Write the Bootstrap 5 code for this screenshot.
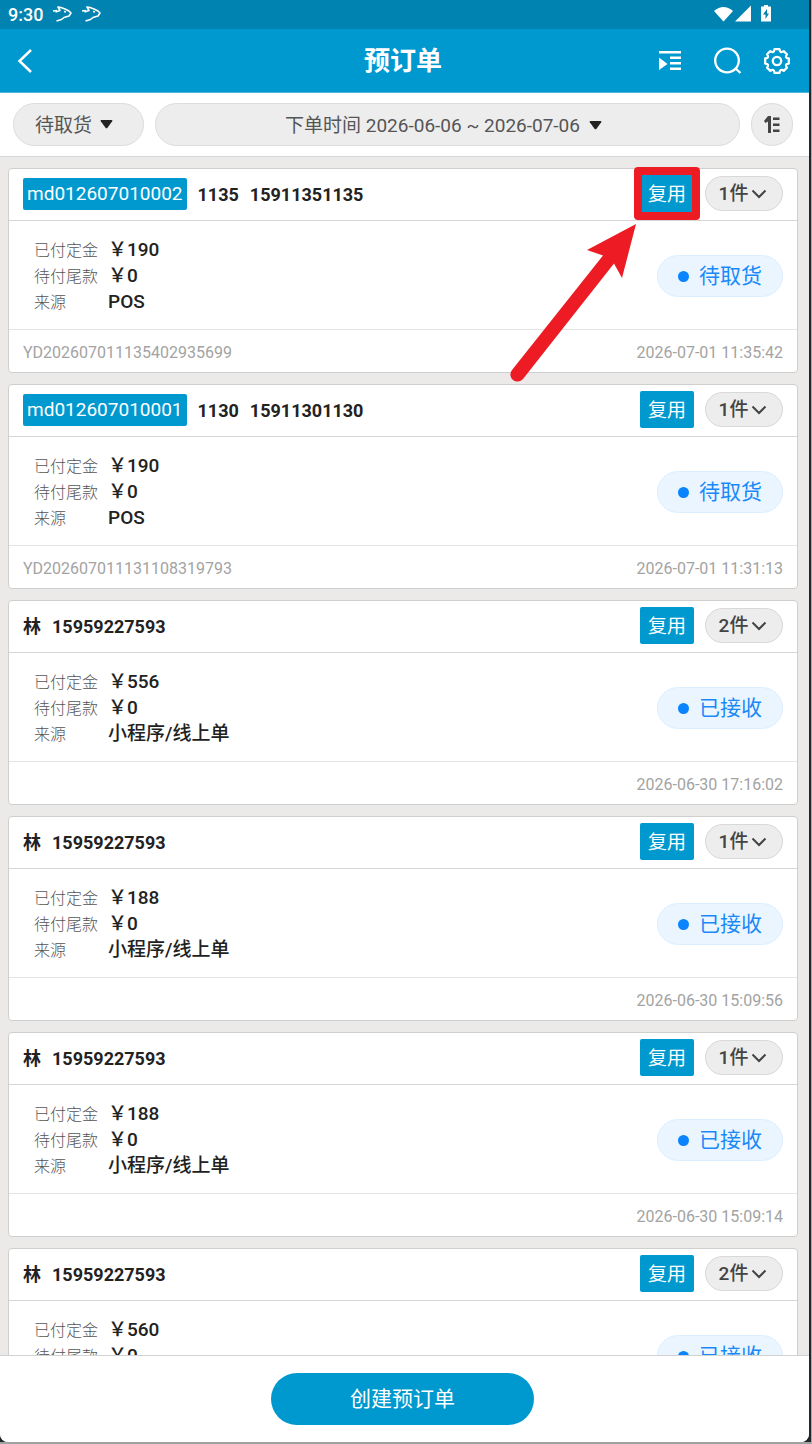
<!DOCTYPE html>
<html lang="zh-CN">
<head>
<meta charset="utf-8">
<meta name="viewport" content="width=device-width, initial-scale=1">
<title>预订单</title>
<link href="https://cdn.jsdelivr.net/npm/bootstrap@5.3.0/dist/css/bootstrap.min.css" rel="stylesheet">
<style>
  :root { --brand: #0099cf; --brand-dark: #0083b0; --mark: #ed1c24; }
  body { font-family: Roboto, "Noto Sans CJK SC", sans-serif; font-size: 19px; line-height: 26px; color: #222; background: #a8aaab; }
  button { font-family: inherit; }
  .screen { height: 100vh; background: #1f282c; padding-right: 2px; margin-right: 1px; }
  .screen-inner { height: calc(100vh - 2px); background: #ebeae9; border-radius: 0 0 8px 8px; overflow: hidden; }
  .device-edge { height: 2px; background: #a0a1a2; margin-right: -2px; }
  .status-bar { height: 29px; background: var(--brand-dark); color: #fff; font-size: 18px; font-weight: 500; padding: 0 36px 0 8px; gap: 10px; }
  .title-bar { height: 64px; background: var(--brand); color: #fff; padding: 1px 19px 0 16px; border-bottom: 1px solid #4db8dd; }
  .title-bar h1 { font-size: 26px; line-height: 36px; font-weight: 700; }
  .title-bar .side { flex: 1 1 0; gap: 22px; }
  .plain-btn { background: none; border: 0; padding: 0; color: inherit; display: flex; }
  .list-btn { margin-right: 11px; }
  .filters { background: #fff; border-bottom: 1px solid #d6d6d6; padding: 10px 16px 10px 13px; gap: 11px; }
  .pill { height: 43px; border: 1px solid #dcdcdc; border-radius: 22px; background: #ededed; color: #555; font-size: 19px; line-height: 26px; }
  .date-pick { padding: 2px 14px 0 6px; gap: 9px; }
  .state-pick { width: 131px; }
  .state-pick select { appearance: none; width: 100%; padding: 2px 21px 0; font-family: inherit; }
  .state-pick svg { position: absolute; right: 31px; top: 17px; pointer-events: none; }
  .sort-btn { width: 42px; }
  .orders { min-height: 0; overflow-y: auto; scrollbar-width: none; padding: 11px 11px 11px 8px; gap: 11px; }
  .orders::-webkit-scrollbar { display: none; }
  .order { flex-shrink: 0; border: 1px solid #cfcfcf; border-radius: 4px; background: #fff; color: #222; }
  .order-head { height: 52px; padding: 0 14px 2px; border-bottom: 1px solid #d6d6d6; gap: 11px; }
  .who { font-size: 18px; font-weight: 700; padding-top: 2px; }
  .code-tag { background: var(--brand); color: #fff; font-size: 19px; line-height: 32px; padding: 0 4px; border-radius: 2px; }
  .reuse { width: 54px; height: 37px; border: 0; border-radius: 2px; background: var(--brand); color: #fff; font-size: 19px; line-height: 26px; padding: 2px 0 0; display: block; }
  .count { width: 78px; height: 35px; border: 1px solid #d8d8d8; border-radius: 18px; background: #ededed; color: #444; font-size: 19px; line-height: 26px; font-weight: 500; padding: 0 2px 0 0; gap: 3px; }
  .order-body { min-height: 109px; padding: 16px 14px 14px 25px; border-bottom: 1px solid #e4e4e4; }
  .order-body dl { display: grid; grid-template-columns: 74px auto; grid-auto-rows: 26px; align-items: baseline; }
  .order-body dt { font-size: 16px; font-weight: 300; color: #555; }
  .order-body dd { font-weight: 500; margin: 0; }
  .state { width: 126px; height: 42px; border: 1px solid #dbeeff; border-radius: 21px; background: #ebf5ff; color: #1989fa; font-size: 21px; gap: 10px; }
  .state::before { content: ""; width: 11px; height: 11px; border-radius: 50%; background: #0a84ff; }
  .order-foot { height: 42px; padding: 3px 14px 0; font-size: 16px; color: #a3a3a3; }
  .mark-frame { position: absolute; inset: -8px -6px; border: 8px solid var(--mark); border-radius: 4px; pointer-events: none; }
  .mark-arrow { position: absolute; left: -133px; top: 45px; z-index: 2; pointer-events: none; }
  .action-bar { background: #fff; border-top: 1px solid #d2d2d2; padding: 17px 4px 17px 0; }
  .create { width: 263px; height: 52px; border: 0; border-radius: 26px; background: var(--brand); color: #fff; font-size: 21px; }
</style>
</head>
<body>
<svg class="d-none" aria-hidden="true">
  <symbol id="chev" viewBox="0 0 16 10"><path d="M1.500 1.500 8 8l6.500-6.500" fill="none" stroke="currentColor" stroke-width="2"/></symbol>
  <symbol id="caret" viewBox="0 0 13 9"><path d="M1.500 0h10q1.500 0 .700 1.200L7.500 7.800q-1 1-2 0L.800 1.200Q0 0 1.500 0z" fill="#222"/></symbol>
  <symbol id="bird" viewBox="0 0 19 17"><path d="M0 5 4 4.500M2.500 6 7 4.500 5 1 8 1.500 12 3l4 2 2 2-2 3-5 1.500-2.500 2L3.500 15M11 5.500l2 .500" fill="none" stroke="#fff" stroke-width="1.600" stroke-linejoin="round"/></symbol>
</svg>
<div class="screen">
<div class="screen-inner d-flex flex-column">
  <div class="status-bar d-flex align-items-center flex-shrink-0">
    <span>9:30</span>
    <svg width="19" height="17"><use href="#bird"/></svg>
    <svg class="me-auto" width="19" height="17"><use href="#bird"/></svg>
    <svg width="60" height="20" viewBox="0 0 60 20" fill="#fff" aria-hidden="true">
      <path d="M1 6Q10.500-2 20 6L10.500 16.500z"/>
      <path d="M38 .500v16H22z"/>
      <path d="M51 0h4v1.500h3V16.500H48V1.500h3z"/>
      <path d="M54 4v4.500h2l-3.500 5.500v-4.500H50z" fill="#0083b0"/>
    </svg>
  </div>
  <header class="title-bar d-flex align-items-center flex-shrink-0">
    <div class="side">
      <button class="plain-btn" type="button" aria-label="返回"><svg width="18" height="26" viewBox="0 0 18 26"><path d="M15 2 3.500 13 15 24" fill="none" stroke="#fff" stroke-width="2.500"/></svg></button>
    </div>
    <h1 class="mb-0">预订单</h1>
    <div class="side d-flex justify-content-end align-items-center">
      <button class="plain-btn list-btn" type="button" aria-label="列表"><svg width="22" height="20" viewBox="0 0 22 20" fill="#fff"><path d="M0 0h22v2.500H0zM11 5.500h11V8H11zM11 11h11v2.500H11zM11 16.500h11V19H11zM0 6.500 8.500 13 0 19z"/></svg></button>
      <button class="plain-btn" type="button" aria-label="搜索"><svg width="28" height="28" viewBox="0 0 28 28"><g fill="none" stroke="#fff" stroke-width="2.300"><circle cx="13" cy="13.500" r="11.800"/><path d="m21 21 5.500 5"/></g></svg></button>
      <button class="plain-btn" type="button" aria-label="设置"><svg width="26" height="26" viewBox="0 0 26 26"><g fill="none" stroke="#fff" stroke-width="2.300" stroke-linejoin="round"><path d="M24.800 10.500v5Q20.300 16 22.900 19.700L19.700 22.900Q16 20.300 15.500 24.800h-5Q10 20.300 6.300 22.900L3.100 19.700Q5.700 16 1.200 15.500v-5Q5.700 10 3.100 6.300L6.300 3.100Q10 5.700 10.500 1.200h5Q16 5.700 19.700 3.100L22.900 6.300Q20.300 10 24.800 10.500z"/><circle cx="13" cy="13" r="4.200"/></g></svg></button>
    </div>
  </header>
  <div class="filters d-flex flex-shrink-0">
    <div class="state-pick position-relative">
      <select class="pill" aria-label="订单状态"><option>待取货</option><option>已接收</option></select>
      <svg width="13" height="9" aria-hidden="true"><use href="#caret"/></svg>
    </div>
    <button class="pill date-pick flex-grow-1 d-flex align-items-center justify-content-center" type="button"><span>下单时间 2026-06-06 ~ 2026-07-06</span><svg width="13" height="9"><use href="#caret"/></svg></button>
    <button class="pill sort-btn p-0 d-flex align-items-center justify-content-center" type="button" aria-label="排序"><svg width="16" height="18" viewBox="0 0 16 18" fill="#444"><path d="M4 0h3v17H4V5.500L1.500 7 0 5zM9 1.500h6.500V4H9zM9 7.500h6.500V10H9zM9 13.500h6.500V16H9z"/></svg></button>
  </div>

  <main class="orders d-flex flex-column flex-grow-1">
    <article class="card order">
      <div class="order-head d-flex align-items-center">
        <span class="code-tag">md012607010002</span><span class="who">1135</span><span class="who">15911351135</span>
        <div class="position-relative ms-auto">
          <button class="reuse" type="button">复用</button>
          <span class="mark-frame"></span>
          <svg class="mark-arrow" width="134" height="168" viewBox="0 0 134 168" aria-hidden="true"><path d="M129 4 80 30l16 5.500L5 150a6.500 6.500 0 0 0 11 9L107 43.500 115 58z" fill="#ed1c24"/></svg>
        </div>
        <button class="count d-flex align-items-center justify-content-center" type="button">1件<svg width="16" height="10"><use href="#chev"/></svg></button>
      </div>
      <div class="order-body d-flex align-items-center justify-content-between">
        <dl class="mb-0"><dt>已付定金</dt><dd>￥190</dd><dt>待付尾款</dt><dd>￥0</dd><dt>来源</dt><dd>POS</dd></dl>
        <span class="state d-flex align-items-center justify-content-center">待取货</span>
      </div>
      <div class="order-foot d-flex align-items-center"><span>YD202607011135402935699</span><time class="ms-auto">2026-07-01 11:35:42</time></div>
    </article>

    <article class="card order">
      <div class="order-head d-flex align-items-center">
        <span class="code-tag">md012607010001</span><span class="who">1130</span><span class="who">15911301130</span>
        <button class="reuse ms-auto" type="button">复用</button>
        <button class="count d-flex align-items-center justify-content-center" type="button">1件<svg width="16" height="10"><use href="#chev"/></svg></button>
      </div>
      <div class="order-body d-flex align-items-center justify-content-between">
        <dl class="mb-0"><dt>已付定金</dt><dd>￥190</dd><dt>待付尾款</dt><dd>￥0</dd><dt>来源</dt><dd>POS</dd></dl>
        <span class="state d-flex align-items-center justify-content-center">待取货</span>
      </div>
      <div class="order-foot d-flex align-items-center"><span>YD202607011131108319793</span><time class="ms-auto">2026-07-01 11:31:13</time></div>
    </article>

    <article class="card order">
      <div class="order-head d-flex align-items-center">
        <span class="who">林</span><span class="who">15959227593</span>
        <button class="reuse ms-auto" type="button">复用</button>
        <button class="count d-flex align-items-center justify-content-center" type="button">2件<svg width="16" height="10"><use href="#chev"/></svg></button>
      </div>
      <div class="order-body d-flex align-items-center justify-content-between">
        <dl class="mb-0"><dt>已付定金</dt><dd>￥556</dd><dt>待付尾款</dt><dd>￥0</dd><dt>来源</dt><dd>小程序/线上单</dd></dl>
        <span class="state d-flex align-items-center justify-content-center">已接收</span>
      </div>
      <div class="order-foot d-flex align-items-center"><time class="ms-auto">2026-06-30 17:16:02</time></div>
    </article>

    <article class="card order">
      <div class="order-head d-flex align-items-center">
        <span class="who">林</span><span class="who">15959227593</span>
        <button class="reuse ms-auto" type="button">复用</button>
        <button class="count d-flex align-items-center justify-content-center" type="button">1件<svg width="16" height="10"><use href="#chev"/></svg></button>
      </div>
      <div class="order-body d-flex align-items-center justify-content-between">
        <dl class="mb-0"><dt>已付定金</dt><dd>￥188</dd><dt>待付尾款</dt><dd>￥0</dd><dt>来源</dt><dd>小程序/线上单</dd></dl>
        <span class="state d-flex align-items-center justify-content-center">已接收</span>
      </div>
      <div class="order-foot d-flex align-items-center"><time class="ms-auto">2026-06-30 15:09:56</time></div>
    </article>

    <article class="card order">
      <div class="order-head d-flex align-items-center">
        <span class="who">林</span><span class="who">15959227593</span>
        <button class="reuse ms-auto" type="button">复用</button>
        <button class="count d-flex align-items-center justify-content-center" type="button">1件<svg width="16" height="10"><use href="#chev"/></svg></button>
      </div>
      <div class="order-body d-flex align-items-center justify-content-between">
        <dl class="mb-0"><dt>已付定金</dt><dd>￥188</dd><dt>待付尾款</dt><dd>￥0</dd><dt>来源</dt><dd>小程序/线上单</dd></dl>
        <span class="state d-flex align-items-center justify-content-center">已接收</span>
      </div>
      <div class="order-foot d-flex align-items-center"><time class="ms-auto">2026-06-30 15:09:14</time></div>
    </article>

    <article class="card order">
      <div class="order-head d-flex align-items-center">
        <span class="who">林</span><span class="who">15959227593</span>
        <button class="reuse ms-auto" type="button">复用</button>
        <button class="count d-flex align-items-center justify-content-center" type="button">2件<svg width="16" height="10"><use href="#chev"/></svg></button>
      </div>
      <div class="order-body d-flex align-items-center justify-content-between">
        <dl class="mb-0 align-self-start"><dt>已付定金</dt><dd>￥560</dd><dt>待付尾款</dt><dd>￥0</dd></dl>
        <span class="state d-flex align-items-center justify-content-center">已接收</span>
      </div>
    </article>
  </main>

  <footer class="action-bar d-flex justify-content-center flex-shrink-0">
    <button class="create" type="button">创建预订单</button>
  </footer>
</div>
<div class="device-edge"></div>
</div>
<script src="https://cdn.jsdelivr.net/npm/bootstrap@5.3.0/dist/js/bootstrap.bundle.min.js"></script>
</body>
</html>
